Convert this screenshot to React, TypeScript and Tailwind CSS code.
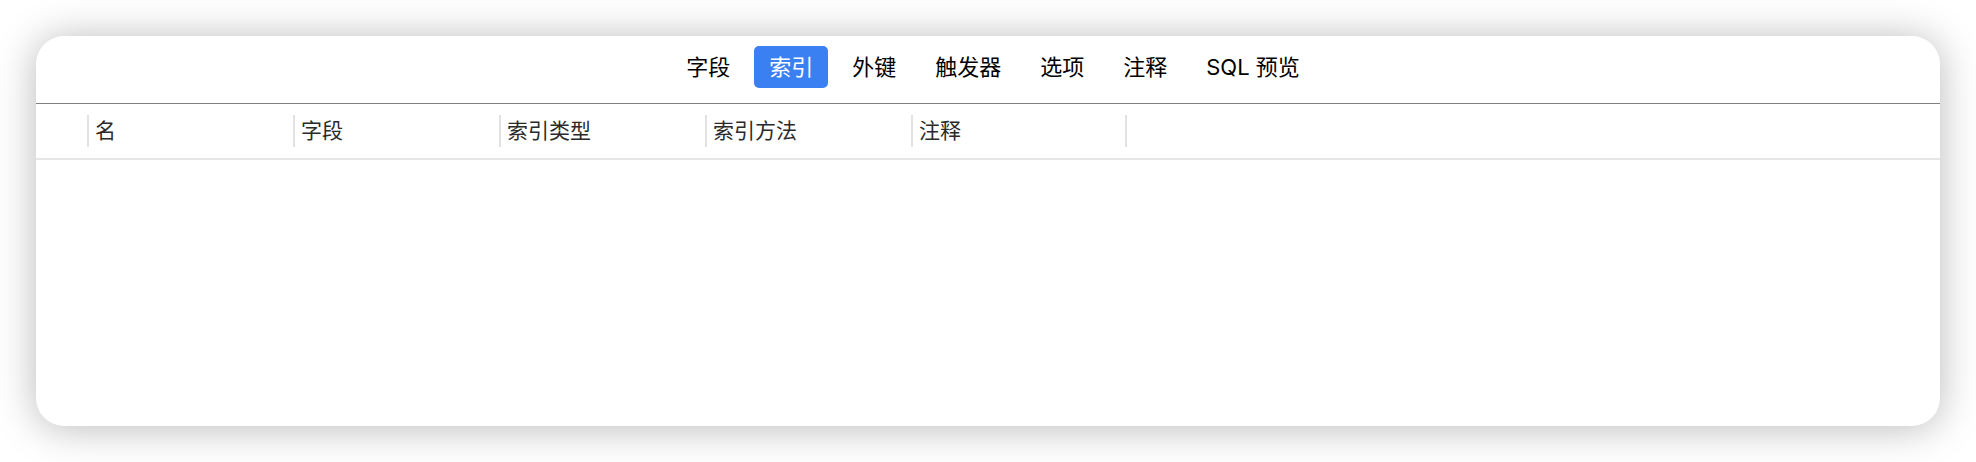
const tabs = ["字段", "索引", "外键", "触发器", "选项", "注释", "SQL 预览"];

const columns = [
  { label: "名", width: "w-[206px]" },
  { label: "字段", width: "w-[206px]" },
  { label: "索引类型", width: "w-[206px]" },
  { label: "索引方法", width: "w-[206px]" },
  { label: "注释", width: "w-[214px]" },
];

export default function App() {
  return (
    <div
      className="w-[1976px] h-[462px] bg-white p-[36px]"
      style={{ fontFamily: '"Inter", "Noto Sans CJK SC", sans-serif' }}
    >
      <div className="h-[390px] rounded-[28px] bg-white overflow-hidden shadow-[0_2px_40px_rgba(0,0,0,0.28)]">
        {/* tab bar */}
        <div className="h-[68px] pt-[10px] pl-[10px] flex justify-center items-start gap-[9px] border-b border-[#808080]">
          {tabs.map((t) => (
            <div
              key={t}
              className={
                t === "索引"
                  ? "h-[42px] px-[15px] flex items-center rounded-[5px] bg-[#3b80f2] text-white text-[22px]"
                  : "h-[42px] px-[15px] flex items-center rounded-[5px] text-black text-[22px]"
              }
            >
              {t}
            </div>
          ))}
        </div>

        {/* table header */}
        <div className="h-[56px] flex items-center border-b-2 border-[#e6e6e6]">
          <div className="w-[51px] shrink-0" />
          {columns.map((c) => (
            <div key={c.label} className={`${c.width} shrink-0 h-full flex items-center`}>
              <div className="w-[2px] h-[32px] bg-[#e2e2e2]" />
              <span className="pl-[6px] text-[21px] text-[#2a2a2a]">{c.label}</span>
            </div>
          ))}
          <div className="w-[2px] h-[32px] bg-[#e2e2e2]" />
        </div>
      </div>
    </div>
  );
}
